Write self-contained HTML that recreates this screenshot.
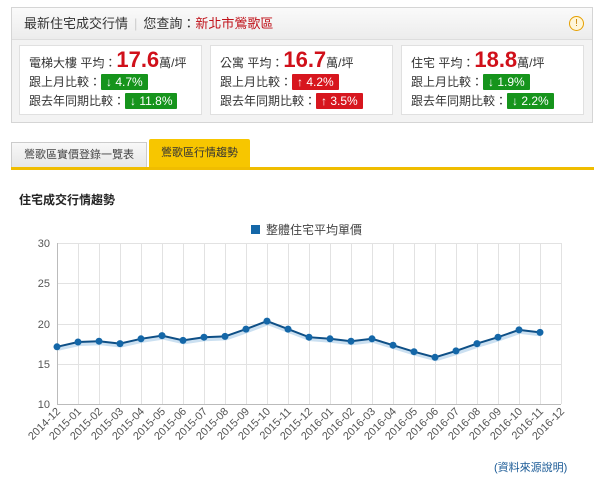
<!DOCTYPE html>
<html><head><meta charset="utf-8"><style>
body{margin:0;width:600px;height:480px;background:#fff;font-family:"Liberation Sans","Noto Sans CJK TC",sans-serif;position:relative;overflow:hidden;color:#333}
.a{position:absolute}
.box{left:11px;top:7px;width:580px;height:114px;border:1px solid #d5d5d5;background:#f3f3f3}
.hd{left:0;top:0;width:580px;height:31px;background:linear-gradient(#fafafa,#ececec);border-bottom:1px solid #ddd;font-size:13px;line-height:31px}
.card{top:37px;width:181px;height:68px;background:#fff;border:1px solid #e0e0e0;font-size:12px}
.big{color:#d0101a;font-weight:bold;font-size:22px}
.g,.r{color:#fff;padding:1px 5px;font-size:12px;border-radius:1px;display:inline-block;line-height:14px}
.g{background:#16941c}.r{background:#d7161e}
.ln{position:absolute;left:9px;white-space:nowrap}
</style></head><body>
<div class="a box">
 <div class="a hd"><span style="margin-left:12px">最新住宅成交行情</span><span style="color:#ccc;margin:0 6px">|</span>您查詢：<span style="color:#c0121a">新北市鶯歌區</span>
  <span class="a" style="right:8px;top:8px;width:13px;height:13px;border:1px solid #e6a000;border-radius:50%;font-size:10px;line-height:13px;text-align:center;color:#c88000;background:#fff6d8">!</span></div>
 <div class="a card" style="left:7px"><div class="ln" style="top:1px">電梯大樓 平均：<span class="big">17.6</span>萬/坪</div><div class="ln" style="top:27px">跟上月比較：<span class="g">↓ 4.7%</span></div><div class="ln" style="top:46px">跟去年同期比較：<span class="g">↓ 11.8%</span></div></div>
 <div class="a card" style="left:198px"><div class="ln" style="top:1px">公寓 平均：<span class="big">16.7</span>萬/坪</div><div class="ln" style="top:27px">跟上月比較：<span class="r">↑ 4.2%</span></div><div class="ln" style="top:46px">跟去年同期比較：<span class="r">↑ 3.5%</span></div></div>
 <div class="a card" style="left:389px"><div class="ln" style="top:1px">住宅 平均：<span class="big">18.8</span>萬/坪</div><div class="ln" style="top:27px">跟上月比較：<span class="g">↓ 1.9%</span></div><div class="ln" style="top:46px">跟去年同期比較：<span class="g">↓ 2.2%</span></div></div>
</div>
<div class="a" style="left:11px;top:142px;width:134px;height:25px;background:linear-gradient(#f8f8f8,#e6e6e6);border:1px solid #ccc;border-bottom:none;font-size:11px;line-height:25px;text-align:center;color:#444">鶯歌區實價登錄一覽表</div>
<div class="a" style="left:149px;top:139px;width:101px;height:29px;background:#f7c600;border-radius:2px 2px 0 0;font-size:11px;line-height:29px;text-align:center;color:#333">鶯歌區行情趨勢</div>
<div class="a" style="left:11px;top:167px;width:583px;height:3px;background:#f0bd00"></div>
<div class="a" style="left:19px;top:191px;font-size:12px;font-weight:bold;color:#222">住宅成交行情趨勢</div>
<svg class="a" style="left:0;top:0" width="600" height="480" font-family="Liberation Sans,Noto Sans CJK TC,sans-serif">
<rect x="251" y="225" width="9" height="9" fill="#1467a8"/><text x="266" y="234" font-size="12" fill="#444">整體住宅平均單價</text>
<g stroke="#e2e2e2" stroke-width="1">
<line x1="57" y1="243.5" x2="561" y2="243.5"/><line x1="57" y1="283.5" x2="561" y2="283.5"/><line x1="57" y1="324.5" x2="561" y2="324.5"/><line x1="57" y1="364.5" x2="561" y2="364.5"/>
<path d="M78.5 243V404M99.5 243V404M120.5 243V404M141.5 243V404M162.5 243V404M183.5 243V404M204.5 243V404M225.5 243V404M246.5 243V404M267.5 243V404M288.5 243V404M309.5 243V404M330.5 243V404M351.5 243V404M372.5 243V404M393.5 243V404M414.5 243V404M435.5 243V404M456.5 243V404M477.5 243V404M498.5 243V404M519.5 243V404M540.5 243V404M561.5 243V404"/>
</g>
<path d="M57.5 243V404.5H561" stroke="#bbb" fill="none"/>
<g font-size="11" fill="#555" text-anchor="end"><text x="50" y="247">30</text><text x="50" y="287">25</text><text x="50" y="328">20</text><text x="50" y="368">15</text><text x="50" y="408">10</text></g>
<polyline fill="none" stroke="#a8cbe8" stroke-width="4" opacity="0.6" transform="translate(1,2)" points="57,346.8 78,342 99,341.2 120,343.6 141,338.8 162,335.6 183,340.4 204,337.2 225,336.4 246,329.1 267,321.1 288,329.1 309,337.2 330,338.8 351,341.2 372,338.8 393,345.2 414,351.7 435,357.3 456,350.9 477,343.6 498,337.2 519,329.9 540,332.4"/>
<polyline fill="none" stroke="#0e4f86" stroke-width="2" points="57,346.8 78,342 99,341.2 120,343.6 141,338.8 162,335.6 183,340.4 204,337.2 225,336.4 246,329.1 267,321.1 288,329.1 309,337.2 330,338.8 351,341.2 372,338.8 393,345.2 414,351.7 435,357.3 456,350.9 477,343.6 498,337.2 519,329.9 540,332.4"/>
<g fill="#1467a8"><circle cx="57" cy="346.8" r="3.5"/><circle cx="78" cy="342" r="3.5"/><circle cx="99" cy="341.2" r="3.5"/><circle cx="120" cy="343.6" r="3.5"/><circle cx="141" cy="338.8" r="3.5"/><circle cx="162" cy="335.6" r="3.5"/><circle cx="183" cy="340.4" r="3.5"/><circle cx="204" cy="337.2" r="3.5"/><circle cx="225" cy="336.4" r="3.5"/><circle cx="246" cy="329.1" r="3.5"/><circle cx="267" cy="321.1" r="3.5"/><circle cx="288" cy="329.1" r="3.5"/><circle cx="309" cy="337.2" r="3.5"/><circle cx="330" cy="338.8" r="3.5"/><circle cx="351" cy="341.2" r="3.5"/><circle cx="372" cy="338.8" r="3.5"/><circle cx="393" cy="345.2" r="3.5"/><circle cx="414" cy="351.7" r="3.5"/><circle cx="435" cy="357.3" r="3.5"/><circle cx="456" cy="350.9" r="3.5"/><circle cx="477" cy="343.6" r="3.5"/><circle cx="498" cy="337.2" r="3.5"/><circle cx="519" cy="329.9" r="3.5"/><circle cx="540" cy="332.4" r="3.5"/></g>
<g font-size="11" fill="#555" text-anchor="end">
<text transform="translate(61,412) rotate(-45)">2014-12</text><text transform="translate(82,412) rotate(-45)">2015-01</text><text transform="translate(103,412) rotate(-45)">2015-02</text><text transform="translate(124,412) rotate(-45)">2015-03</text><text transform="translate(145,412) rotate(-45)">2015-04</text><text transform="translate(166,412) rotate(-45)">2015-05</text><text transform="translate(187,412) rotate(-45)">2015-06</text><text transform="translate(208,412) rotate(-45)">2015-07</text><text transform="translate(229,412) rotate(-45)">2015-08</text><text transform="translate(250,412) rotate(-45)">2015-09</text><text transform="translate(271,412) rotate(-45)">2015-10</text><text transform="translate(292,412) rotate(-45)">2015-11</text><text transform="translate(313,412) rotate(-45)">2015-12</text><text transform="translate(334,412) rotate(-45)">2016-01</text><text transform="translate(355,412) rotate(-45)">2016-02</text><text transform="translate(376,412) rotate(-45)">2016-03</text><text transform="translate(397,412) rotate(-45)">2016-04</text><text transform="translate(418,412) rotate(-45)">2016-05</text><text transform="translate(439,412) rotate(-45)">2016-06</text><text transform="translate(460,412) rotate(-45)">2016-07</text><text transform="translate(481,412) rotate(-45)">2016-08</text><text transform="translate(502,412) rotate(-45)">2016-09</text><text transform="translate(523,412) rotate(-45)">2016-10</text><text transform="translate(544,412) rotate(-45)">2016-11</text><text transform="translate(565,412) rotate(-45)">2016-12</text>
</g>
<text x="494" y="471" font-size="11" fill="#1a5a96">(資料來源說明)</text>
</svg>
</body></html>
